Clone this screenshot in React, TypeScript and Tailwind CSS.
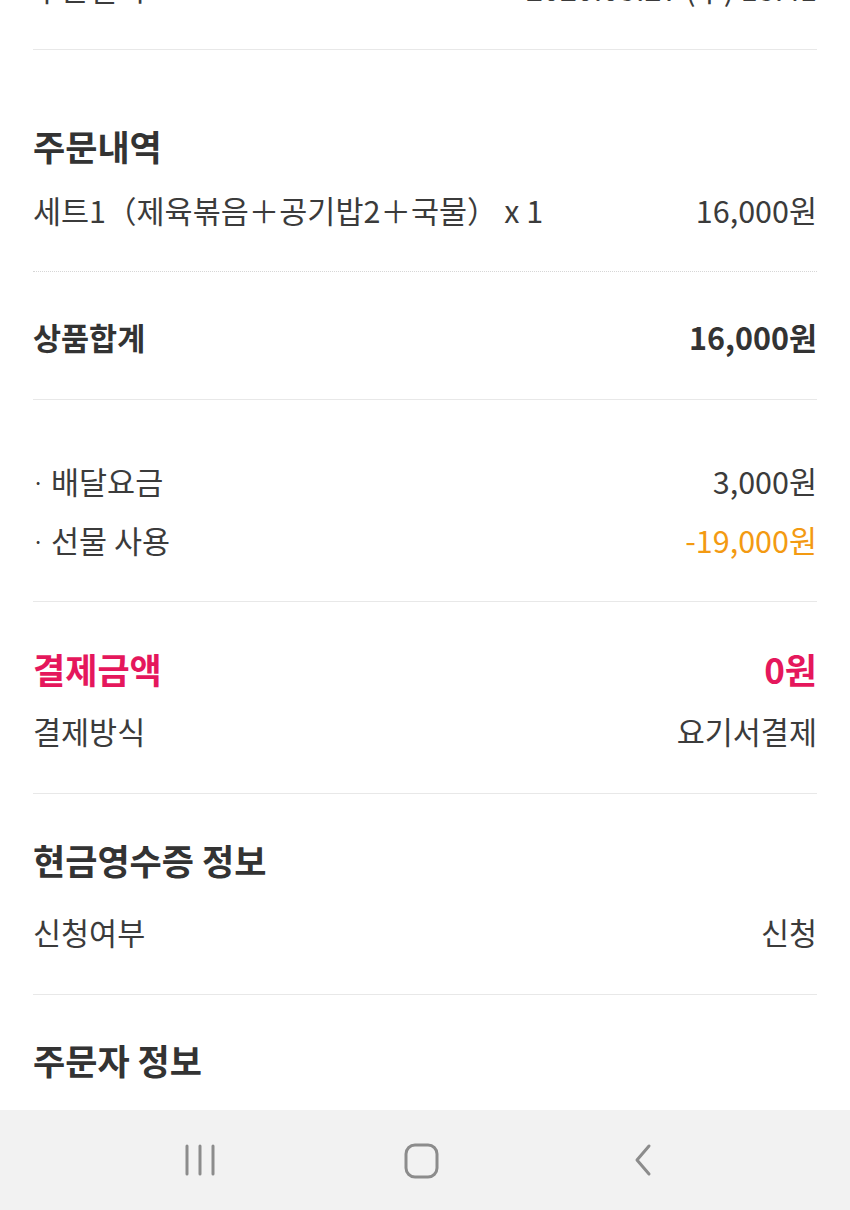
import React from "react";

type Row = { label: string; value: string; bullet?: boolean; valueClass?: string };

function LineRow({ label, value, bullet, valueClass }: Row) {
  return (
    <div className="flex items-center justify-between h-[40px] text-[30.5px] leading-[40px] text-[#3b3b3b]">
      <span className="flex items-center">
        {bullet && <span className="w-[19px] text-[22px] -ml-[1px]">·</span>}
        {label}
      </span>
      <span className={valueClass}>{value}</span>
    </div>
  );
}

function Heading({ children }: { children: React.ReactNode }) {
  return <div className="h-[40px] leading-[40px] text-[35px] font-bold text-[#333]">{children}</div>;
}

export default function App() {
  return (
    <div className="w-[850px] h-[1210px] bg-white flex flex-col font-['Noto_Sans_CJK_KR','Noto_Sans',sans-serif] overflow-hidden">
      <div className="flex-1 overflow-hidden px-[33px]">
        {/* clipped top row */}
        <div className="h-[50px] overflow-hidden border-b border-[#e8e8e8]">
          <div className="-mt-[32px]">
            <LineRow label="주문일시" value="2020.05.27 (수) 18:41" />
          </div>
        </div>

        {/* 주문내역 */}
        <div className="pt-[76px] pb-[41px] border-b border-dotted border-[#d6d6d6]">
          <Heading>주문내역</Heading>
          <div className="mt-[24px]">
            <LineRow label="세트1（제육볶음＋공기밥2＋국물） x 1" value="16,000원" />
          </div>
        </div>

        {/* 상품합계 */}
        <div className="pt-[46px] pb-[41px] border-b border-[#e8e8e8]">
          <div className="flex items-center justify-between h-[40px] text-[30.5px] font-bold text-[#333]">
            <span>상품합계</span>
            <span>16,000원</span>
          </div>
        </div>

        {/* fees */}
        <div className="pt-[61px] pb-[41px] border-b border-[#e8e8e8] flex flex-col gap-[19px]">
          <LineRow bullet label="배달요금" value="3,000원" />
          <LineRow bullet label="선물 사용" value="-19,000원" valueClass="text-[#f39a12]" />
        </div>

        {/* 결제금액 */}
        <div className="pt-[47px] pb-[42px] border-b border-[#e8e8e8]">
          <div className="flex items-center justify-between h-[40px] text-[35px] font-bold text-[#e5175c]">
            <span>결제금액</span>
            <span>0원</span>
          </div>
          <div className="mt-[22px]">
            <LineRow label="결제방식" value="요기서결제" />
          </div>
        </div>

        {/* 현금영수증 정보 */}
        <div className="pt-[46px] pb-[42px] border-b border-[#e8e8e8]">
          <Heading>현금영수증 정보</Heading>
          <div className="mt-[32px]">
            <LineRow label="신청여부" value="신청" />
          </div>
        </div>

        {/* 주문자 정보 */}
        <div className="pt-[45px]">
          <Heading>주문자 정보</Heading>
        </div>
      </div>

      {/* android navigation bar */}
      <div className="h-[100px] bg-[#f2f2f2] shrink-0 flex items-center pl-[90px]">
        <div className="w-[221px] flex justify-center">
          <svg width="33" height="34" viewBox="0 0 33 34">
            <g stroke="#8c8c8c" strokeWidth="3" strokeLinecap="round">
              <line x1="3" y1="3" x2="3" y2="31" />
              <line x1="16" y1="3" x2="16" y2="31" />
              <line x1="29" y1="3" x2="29" y2="31" />
            </g>
          </svg>
        </div>
        <div className="w-[221px] flex justify-center">
          <svg width="36" height="36" viewBox="0 0 36 36" className="mt-[1px]">
            <rect x="2" y="2" width="31" height="32" rx="9" fill="none" stroke="#8c8c8c" strokeWidth="3" />
          </svg>
        </div>
        <div className="w-[221px] flex justify-center">
          <svg width="24" height="34" viewBox="0 0 24 34">
            <polyline points="18,3 6,17 18,31" fill="none" stroke="#8c8c8c" strokeWidth="3" strokeLinecap="round" strokeLinejoin="round" />
          </svg>
        </div>
      </div>
    </div>
  );
}
